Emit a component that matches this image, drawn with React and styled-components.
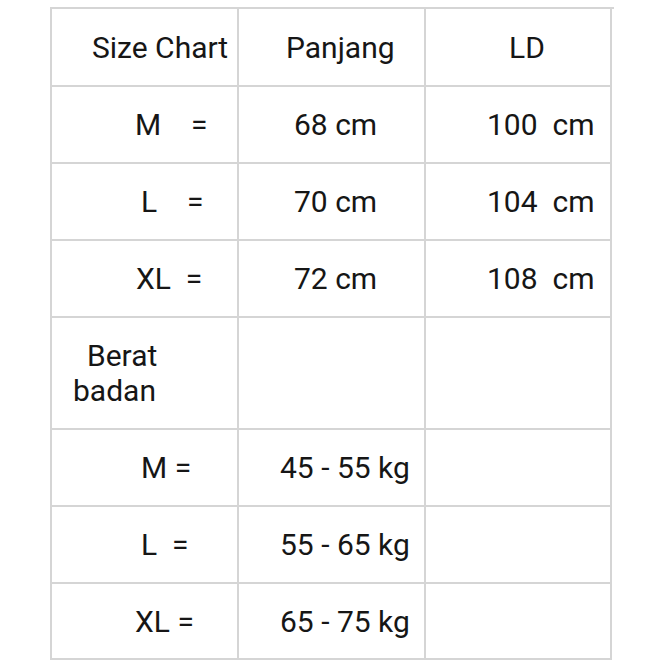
import React from "react";
import styled, { createGlobalStyle } from "styled-components";

const Global = createGlobalStyle`
  html, body { margin: 0; padding: 0; background: #ffffff; }
  body { font-family: Roboto, "Noto Sans", Arial, sans-serif; color: #161616; }
`;

const Page = styled.div`
  width: 668px;
  height: 669px;
  padding: 7px 0 0 50px;
  box-sizing: border-box;
`;

const Table = styled.div`
  display: grid;
  grid-template-columns: 187px 187px 186px;
  grid-template-rows: 78px 77px 77px 77px 112px 77px 77px 76px;
  width: 562px;
  border-top: 2px solid #d5d5d5;
  border-left: 2px solid #d5d5d5;
`;

const Cell = styled.div`
  display: flex;
  align-items: center;
  box-sizing: border-box;
  border-right: 2px solid #d5d5d5;
  border-bottom: 2px solid #d5d5d5;
  padding-left: ${(p) => p.$pad || 0}px;
  font-size: 30px;
  white-space: pre;
  line-height: 35px;
`;

const Lines = styled.div`
  display: flex;
  flex-direction: column;
`;

const Line = styled.span`
  padding-left: ${(p) => p.$indent || 0}px;
`;

const rows = [
  [["Size Chart", 40], ["Panjang", 47], ["LD", 83]],
  [["M    =", 83], ["68 cm", 55], ["100  cm", 61]],
  [["L    =", 89], ["70 cm", 55], ["104  cm", 61]],
  [["XL  =", 84], ["72 cm", 55], ["108  cm", 61]],
  null,
  [["M =", 89], ["45 - 55 kg", 41], ["", 0]],
  [["L  =", 89], ["55 - 65 kg", 41], ["", 0]],
  [["XL =", 83], ["65 - 75 kg", 41], ["", 0]],
];

export default function App() {
  return (
    <>
      <Global />
      <Page>
        <Table>
          {rows.map((r, i) =>
            r ? (
              r.map(([t, pad], j) => (
                <Cell key={`${i}-${j}`} $pad={pad}>
                  {t}
                </Cell>
              ))
            ) : (
              <React.Fragment key={i}>
                <Cell $pad={21}>
                  <Lines>
                    <Line $indent={14}>Berat</Line>
                    <Line>badan</Line>
                  </Lines>
                </Cell>
                <Cell />
                <Cell />
              </React.Fragment>
            )
          )}
        </Table>
      </Page>
    </>
  );
}
